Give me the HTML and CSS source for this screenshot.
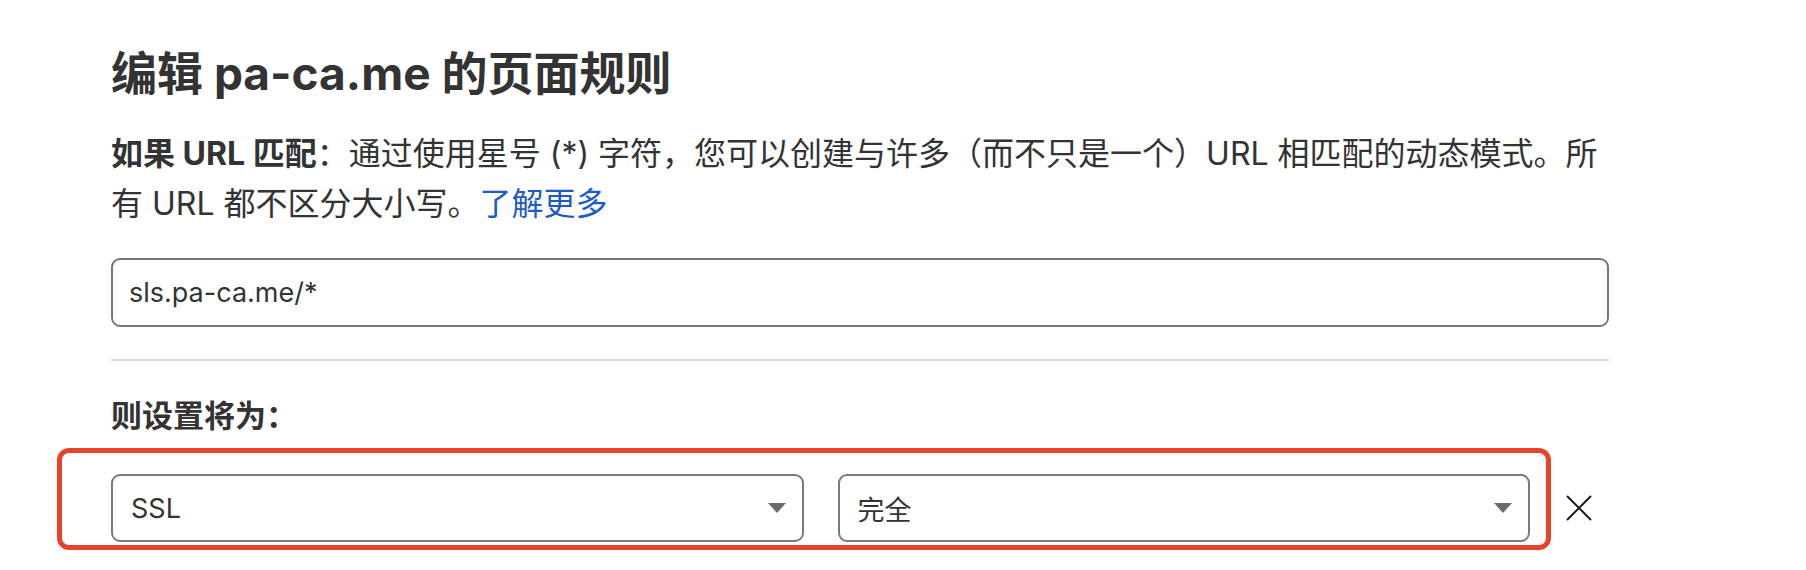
FILE: index.html
```html
<!DOCTYPE html>
<html lang="zh-CN">
<head>
<meta charset="utf-8">
<title>编辑 pa-ca.me 的页面规则</title>
<link rel="stylesheet" href="styles.css">
</head>
<body>
<main class="page">
  <h1 class="title">编辑 pa-ca.me 的页面规则</h1>
  <p class="desc"><strong>如果 URL 匹配</strong>：通过使用星号 (*) 字符，您可以创建与许多（而不只是一个）URL 相匹配的动态模式。所有 URL 都不区分大小写。<a class="link" href="#">了解更多</a></p>
  <input class="url-input" type="text" value="sls.pa-ca.me/*">
  <hr class="divider">
  <div class="label">则设置将为：</div>
  <div class="setting-row">
    <div class="selects">
      <div class="highlight"></div>
      <div class="select"><span>SSL</span><span class="caret"></span></div>
      <div class="select"><span>完全</span><span class="caret"></span></div>
    </div>
    <button class="remove" type="button" aria-label="删除">
      <svg width="26" height="26" viewBox="0 0 26 26"><path d="M1 1 L25 25 M25 1 L1 25" stroke="#1d1d1d" stroke-width="2" fill="none"/></svg>
    </button>
  </div>
</main>
</body>
</html>
```

FILE: styles.css
```css
html, body {
  margin: 0;
  padding: 0;
  background: #ffffff;
}

body {
  min-height: 570px;
  font-family: Inter, "Noto Sans CJK SC", sans-serif;
  color: #333333;
}

.page {
  width: 1498px;
  padding: 45px 0 27px 111px;
}

.title {
  margin: 0;
  font-size: 46px;
  line-height: 56px;
  font-weight: 700;
  color: #333333;
}

.desc {
  margin: 28px 0 0 0;
  font-size: 32px;
  line-height: 50px;
  color: #333333;
}

.desc strong {
  font-weight: 700;
}

.link {
  color: #1f5bc6;
  text-decoration: none;
}

.url-input {
  display: block;
  box-sizing: border-box;
  width: 100%;
  height: 69px;
  margin: 29px 0 0 0;
  padding: 0 16px;
  border: 2px solid #767676;
  border-radius: 9px;
  font-family: Inter, "Noto Sans CJK SC", sans-serif;
  font-size: 27px;
  color: #333333;
  background: #ffffff;
  outline: none;
}

.divider {
  margin: 32px 0 0 0;
  border: 0;
  height: 2px;
  background: #dcdcdc;
}

.label {
  margin-top: 33px;
  font-size: 31px;
  line-height: 44px;
  font-weight: 700;
  color: #333333;
}

.setting-row {
  display: flex;
  align-items: center;
  margin-top: 36px;
}

.selects {
  position: relative;
  display: flex;
  gap: 34px;
  width: 1419px;
}

.highlight {
  position: absolute;
  left: -54px;
  top: -26px;
  width: 1494px;
  height: 102px;
  box-sizing: border-box;
  border: 5px solid #e8432b;
  border-radius: 12px;
  pointer-events: none;
}

.select {
  flex: 1;
  box-sizing: border-box;
  height: 68px;
  display: flex;
  align-items: center;
  justify-content: space-between;
  padding: 0 16px 0 18px;
  border: 2px solid #7a7a7a;
  border-radius: 9px;
  font-size: 27px;
  color: #333333;
  background: #ffffff;
}

.caret {
  width: 0;
  height: 0;
  border-left: 9px solid transparent;
  border-right: 9px solid transparent;
  border-top: 10px solid #6b6b6b;
}

.remove {
  margin-left: 36px;
  padding: 0;
  border: 0;
  background: transparent;
  display: flex;
  align-items: center;
  justify-content: center;
  width: 26px;
  height: 26px;
}
```
